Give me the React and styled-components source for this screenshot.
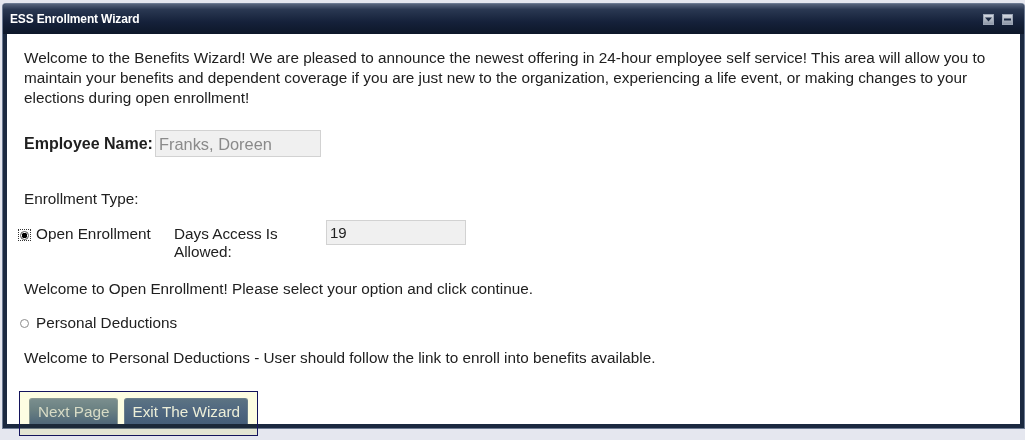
import React from "react";
import styled, { createGlobalStyle } from "styled-components";

const Global = createGlobalStyle`
  html, body { margin: 0; padding: 0; }
  body {
    background: #e5e7ef;
    font-family: "Liberation Sans", Arial, sans-serif;
    color: #202020;
    width: 1025px;
    height: 440px;
    overflow: hidden;
  }
`;

const Page = styled.div`
  padding: 4px 1px 0 3px;
`;

const Panel = styled.div`
  display: flex;
  flex-direction: column;
  height: 424px;
  background: #1b2940;
  border-radius: 3px 3px 0 0;
  box-shadow: 0 0 0 1px #6c7a92;
`;

const TitleBar = styled.div`
  display: flex;
  align-items: center;
  height: 30px;
  padding: 0 11px 0 7px;
  background: linear-gradient(#56637b 0%, #2a3852 18%, #15213a 60%, #0d1729 100%);
  border-radius: 3px 3px 0 0;
`;

const Title = styled.div`
  flex: 1;
  color: #fff;
  font-size: 12px;
  font-weight: bold;
  letter-spacing: -0.15px;
`;

const Tools = styled.div`
  display: flex;
  gap: 8px;
`;

const ToolButton = styled.div`
  width: 11px;
  height: 11px;
  box-sizing: border-box;
  border: 1px solid #9aa4b4;
  background: linear-gradient(#d3d8e0, #8e98a8);
  display: flex;
  align-items: center;
  justify-content: center;
`;

const Body = styled.div`
  flex: 1;
  margin: 0 4px 4px 4px;
  background: #fff;
  padding: 14px 4px 0 17px;
  display: flex;
  flex-direction: column;
  font-size: 15.3px;
  line-height: 20px;
`;

const Para = styled.p`
  margin: ${(p) => p.$top || 0}px 0 0 0;
`;

const FieldRow = styled.div`
  display: flex;
  align-items: center;
  margin-top: ${(p) => p.$top || 0}px;
`;

const Label = styled.span`
  font-weight: bold;
  font-size: 16px;
`;

const TextBox = styled.div`
  box-sizing: border-box;
  width: ${(p) => p.$w}px;
  height: ${(p) => p.$h}px;
  margin-left: ${(p) => p.$left || 0}px;
  background: #f0f0f0;
  border: 1px solid #d2d2d2;
  color: ${(p) => (p.$dim ? "#8a8a8a" : "#222")};
  padding: 0 3px;
  display: flex;
  align-items: center;
  font-size: ${(p) => (p.$dim ? 16.4 : 15)}px;
`;

const OptionRow = styled.div`
  display: flex;
  align-items: ${(p) => (p.$top ? "flex-start" : "center")};
  margin-left: -6px;
  margin-top: ${(p) => p.$mt || 0}px;
`;

const Radio = styled.span`
  box-sizing: border-box;
  width: 13px;
  height: 12px;
  margin-right: 5px;
  display: flex;
  align-items: center;
  justify-content: center;
  border: 1px dotted ${(p) => (p.$focus ? "#333" : "transparent")};
  &::before {
    content: "";
    box-sizing: border-box;
    width: 9px;
    height: 9px;
    border-radius: 50%;
    border: 1px solid ${(p) => (p.$on ? "#555" : "#8c8c8c")};
    background: ${(p) => (p.$on ? "radial-gradient(circle, #000 0 2.6px, #fff 3px)" : "#fff")};
  }
`;

const OptionText = styled.span`
  width: ${(p) => (p.$w ? `${p.$w}px` : "auto")};
`;

const DaysLabel = styled.span`
  width: 152px;
  line-height: 18px;
  padding-top: 5px;
`;

const ButtonBar = styled.div`
  position: relative;
  display: flex;
  gap: 6px;
  margin-top: auto;
  padding-left: 5px;
`;

const Button = styled.div`
  height: 25px;
  padding: 0 ${(p) => (p.$off ? 8 : 7)}px;
  display: flex;
  align-items: center;
  border-radius: 3px 3px 0 0;
  border: 1px solid ${(p) => (p.$off ? "#8c9aa4" : "#6a7e9c")};
  border-bottom: none;
  background: ${(p) =>
    p.$off
      ? "linear-gradient(#7b8fa0, #6b8192 45%, #4f6889)"
      : "linear-gradient(#5d7494, #4f6890 50%, #455f88)"};
  color: ${(p) => (p.$off ? "#d9dde0" : "#eef0f4")};
  font-size: 15.3px;
`;

const Highlight = styled.div`
  position: absolute;
  left: -5px;
  top: -7px;
  width: 239px;
  height: 45px;
  box-sizing: border-box;
  border: 1px solid #14145c;
  pointer-events: none;
  &::before {
    content: "";
    position: absolute;
    inset: 0;
    background: #fdfde2;
    mix-blend-mode: multiply;
  }
`;

export default function App() {
  return (
    <>
      <Global />
      <Page>
        <Panel>
          <TitleBar>
            <Title>ESS Enrollment Wizard</Title>
            <Tools>
              <ToolButton>
                <svg width="7" height="5" viewBox="0 0 7 5">
                  <path d="M0 0.5 H7 L3.5 4.5 Z" fill="#1c2b44" />
                </svg>
              </ToolButton>
              <ToolButton>
                <svg width="7" height="3" viewBox="0 0 7 3">
                  <rect x="0" y="0.5" width="7" height="2" fill="#1c2b44" />
                </svg>
              </ToolButton>
            </Tools>
          </TitleBar>
          <Body>
            <Para>
              Welcome to the Benefits Wizard! We are pleased to announce the newest offering in 24-hour
              employee self service! This area will allow you to maintain your benefits and dependent
              coverage if you are just new to the organization, experiencing a life event, or making
              changes to your elections during open enrollment!
            </Para>
            <FieldRow $top={22}>
              <Label>Employee Name:</Label>
              <TextBox $w={166} $h={27} $left={2} $dim>
                Franks, Doreen
              </TextBox>
            </FieldRow>
            <Para $top={32}>Enrollment Type:</Para>
            <OptionRow $top $mt={11}>
              <Radio $on $focus style={{ marginTop: 9 }} />
              <OptionText $w={138} style={{ paddingTop: 4 }}>
                Open Enrollment
              </OptionText>
              <DaysLabel>
                Days Access Is
                <br />
                Allowed:
              </DaysLabel>
              <TextBox $w={140} $h={25}>
                19
              </TextBox>
            </OptionRow>
            <Para $top={18}>
              Welcome to Open Enrollment! Please select your option and click continue.
            </Para>
            <OptionRow $mt={14}>
              <Radio />
              <OptionText>Personal Deductions</OptionText>
            </OptionRow>
            <Para $top={15}>
              Welcome to Personal Deductions - User should follow the link to enroll into benefits
              available.
            </Para>
            <ButtonBar>
              <Button $off>Next Page</Button>
              <Button>Exit The Wizard</Button>
              <Highlight />
            </ButtonBar>
          </Body>
        </Panel>
      </Page>
    </>
  );
}
